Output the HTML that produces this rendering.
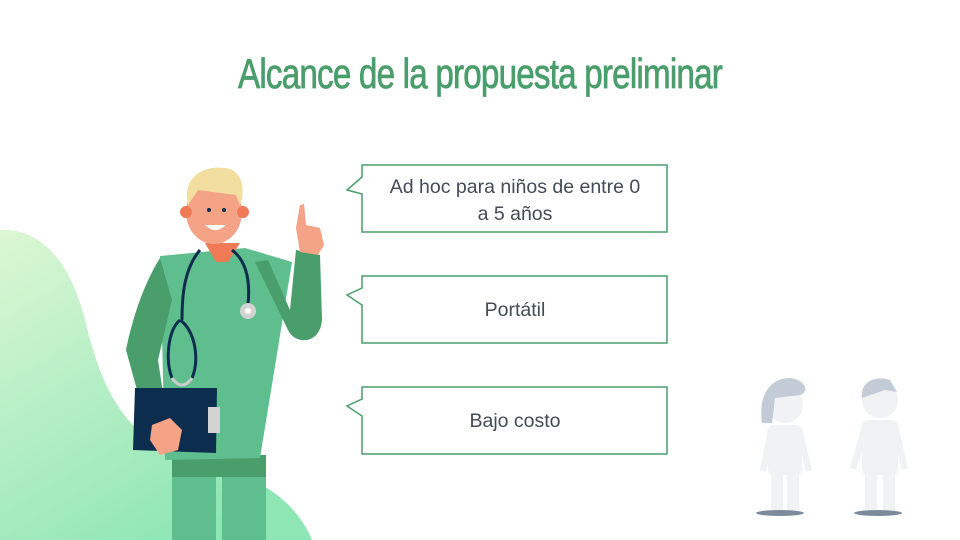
<!DOCTYPE html>
<html><head><meta charset="utf-8"><style>
body{margin:0;width:960px;height:540px;overflow:hidden;background:#fff;position:relative;font-family:"Liberation Sans",sans-serif}
h1{position:absolute;left:0;width:960px;top:50px;margin:0;text-align:center;font-weight:normal;color:#4a9e6b;font-size:42px;letter-spacing:-1px;transform:scaleX(0.79);-webkit-text-stroke:0.8px #4a9e6b;font-family:"Liberation Sans Narrow","Liberation Sans",sans-serif}
.t{position:absolute;left:362px;width:306px;text-align:center;color:#434b56;font-size:19.5px;line-height:27px}
svg{position:absolute;left:0;top:0}
</style></head><body>
<svg width="960" height="540" viewBox="0 0 960 540">
<defs><linearGradient id="g" x1="0" y1="0" x2="0.6" y2="1"><stop offset="0" stop-color="#dcf7d4"/><stop offset="1" stop-color="#8ee6b5"/></linearGradient></defs>
<path d="M0 230 C40 228 70 260 85 320 C100 380 120 450 220 470 C270 480 300 510 312 540 L0 540Z" fill="url(#g)"/>
<g fill="#fff" stroke="#4a9e6b" stroke-width="1.5">
<path d="M362 165 H667 V232 H362 V194 L347 190 L362 177 Z"/>
<path d="M362 276 H667 V343 H362 V305 L347 295 L362 288 Z"/>
<path d="M362 387 H667 V454 H362 V416 L347 406 L362 399 Z"/>
</g>
<rect x="172" y="455" width="44" height="85" fill="#5fbe8d"/>
<rect x="222" y="455" width="44" height="85" fill="#5fbe8d"/>
<rect x="172" y="455" width="94" height="22" fill="#4a9e6b"/>
<path d="M160 256 L245 248 L292 262 L260 458 L165 460 Z" fill="#5fbe8d"/>
<path d="M160 258 C140 290 130 330 126 350 L148 430 L168 425 L158 360 L172 300 Z" fill="#4a9e6b"/>
<path d="M255 262 L288 330 C295 345 320 345 322 320 L320 255 L296 250 L290 310 L268 260Z" fill="#4a9e6b"/>
<path d="M205 243 L240 243 L228 262 L216 262Z" fill="#f07a56"/>
<path d="M300 205 L304 204 L306 225 L320 228 L324 245 L318 255 L300 252 L296 228 Z" fill="#f4a386"/>
<ellipse cx="214" cy="212" rx="28" ry="32" fill="#f4a386"/>
<circle cx="186" cy="212" r="6" fill="#f07a56"/><circle cx="243" cy="212" r="6" fill="#f07a56"/>
<path d="M188 205 C182 180 200 165 225 168 C245 170 245 195 240 205 L236 195 L198 190 Z" fill="#f2df9f"/>
<circle cx="209" cy="210" r="2" fill="#0c2d4e"/><circle cx="224" cy="210" r="2" fill="#0c2d4e"/>
<path d="M205 225 Q215 235 226 225 Z" fill="#fff"/>
<path d="M200 250 C183 270 182 300 182 320 M180 320 C168 330 165 360 172 378 M180 320 C195 330 200 360 192 378" stroke="#0c2d4e" stroke-width="3" fill="none"/>
<path d="M232 250 C248 262 250 285 248 305" stroke="#0c2d4e" stroke-width="3" fill="none"/>
<circle cx="248" cy="311" r="8" fill="#d3d3d3"/><circle cx="248" cy="311" r="3" fill="#fff"/>
<path d="M172 378 Q182 392 192 378" stroke="#ccc" stroke-width="3" fill="none"/>
<path d="M135 388 L217 388 L216 453 L133 450 Z" fill="#0c2d4e"/>
<rect x="208" y="407" width="12" height="26" fill="#d3d3d3"/>
<path d="M152 425 L170 418 L182 430 L178 450 L160 455 L150 440Z" fill="#f4a386"/>
<g fill="#f0f2f4">
<circle cx="785" cy="405" r="18"/><rect x="768" y="425" width="34" height="50" rx="6"/>
<rect x="771" y="465" width="12" height="45"/><rect x="787" y="465" width="12" height="45"/>
<path d="M768 428 L760 470 L766 472 L775 432Z M802 428 L812 470 L806 472 L796 432Z"/>
<circle cx="880" cy="400" r="18"/><rect x="862" y="420" width="36" height="55" rx="6"/>
<rect x="865" y="465" width="12" height="45"/><rect x="883" y="465" width="12" height="45"/>
<path d="M862 425 L850 468 L856 470 L870 430Z M898 425 L908 468 L902 470 L890 430Z"/>
</g>
<path d="M762 423 C758 395 770 378 790 378 C806 380 810 392 800 395 L775 398 L772 423Z" fill="#c3ccd6"/>
<path d="M862 398 C860 382 875 375 890 380 L897 392 L885 390 Z" fill="#c3ccd6"/>
<ellipse cx="780" cy="513" rx="24" ry="3" fill="#7b8b9b"/>
<ellipse cx="878" cy="513" rx="24" ry="3" fill="#7b8b9b"/>
</svg>
<h1>Alcance de la propuesta preliminar</h1>
<div class="t" style="top:174px">Ad hoc para niños de entre 0<br>a 5 años</div>
<div class="t" style="top:297px">Portátil</div>
<div class="t" style="top:408px">Bajo costo</div>
</body></html>
